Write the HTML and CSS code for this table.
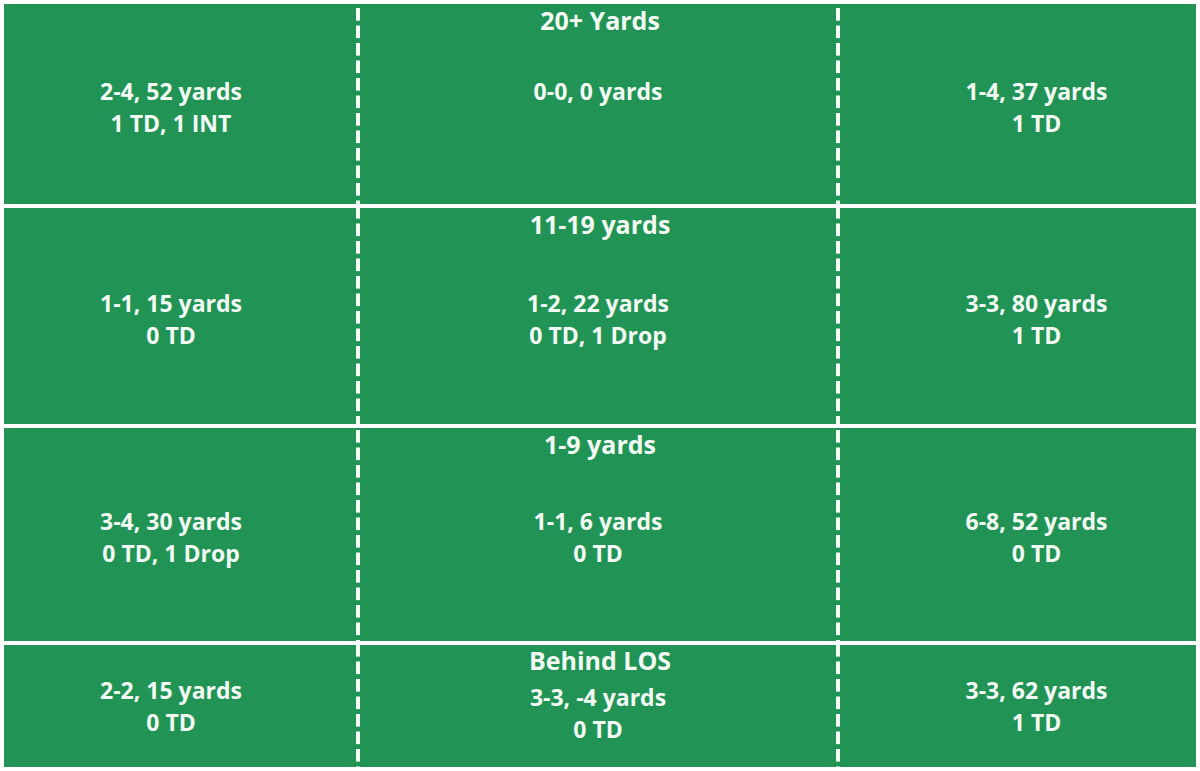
FILE: index.html
```html
<!DOCTYPE html>
<html>
<head>
<meta charset="utf-8">
<link rel="stylesheet" href="styles.css">
</head>
<body>
<div class="field">
  <div class="row row-deep">
    <div class="cell side-left"><div class="body">2-4, 52 yards<br>1 TD, 1 INT</div></div>
    <div class="cell mid">
      <div class="zone">20+ Yards</div>
      <div class="body">0-0, 0 yards<br>&nbsp;</div>
    </div>
    <div class="cell side-right"><div class="body">1-4, 37 yards<br>1 TD</div></div>
  </div>
  <div class="row row-inter">
    <div class="cell side-left"><div class="body">1-1, 15 yards<br>0 TD</div></div>
    <div class="cell mid">
      <div class="zone">11-19 yards</div>
      <div class="body">1-2, 22 yards<br>0 TD, 1 Drop</div>
    </div>
    <div class="cell side-right"><div class="body">3-3, 80 yards<br>1 TD</div></div>
  </div>
  <div class="row row-short">
    <div class="cell side-left"><div class="body">3-4, 30 yards<br>0 TD, 1 Drop</div></div>
    <div class="cell mid">
      <div class="zone">1-9 yards</div>
      <div class="body">1-1, 6 yards<br>0 TD</div>
    </div>
    <div class="cell side-right"><div class="body">6-8, 52 yards<br>0 TD</div></div>
  </div>
  <div class="row row-behind">
    <div class="cell side-left"><div class="body">2-2, 15 yards<br>0 TD</div></div>
    <div class="cell mid mid-stack">
      <div class="zone">Behind LOS</div>
      <div class="body">3-3, -4 yards<br>0 TD</div>
    </div>
    <div class="cell side-right"><div class="body">3-3, 62 yards<br>1 TD</div></div>
  </div>
</div>
</body>
</html>
```

FILE: styles.css
```css
html, body {
  margin: 0;
  padding: 0;
  background: #ffffff;
}

body {
  width: 1200px;
  height: 771px;
  overflow: hidden;
  font-family: "Open Sans", "Liberation Sans", sans-serif;
  font-weight: 700;
  color: #f3faf4;
}

.field {
  margin: 4px 4px 0 4px;
  width: 1192px;
  height: 763px;
  display: grid;
  grid-template-rows: 200px 216px 213px 122px;
  row-gap: 4px;
  background: #ffffff;
}

.row {
  display: grid;
  grid-template-columns: 352px 476px 356px;
  column-gap: 4px;
  background: repeating-linear-gradient(to bottom, #f6fbf7 0 12.5px, #219455 12.5px 17.5px);
  background-size: 100% 17.5px;
}

.row-deep { background-position: 0 4px; }
.row-inter { background-position: 0 -2px; }
.row-short { background-position: 0 2px; }
.row-behind { background-position: 0 -1px; }

.cell {
  background: #219455;
  display: grid;
  text-align: center;
  font-size: 23px;
  line-height: 32px;
}

.cell > * {
  grid-area: 1 / 1;
}

.body {
  align-self: center;
  margin-top: 5px;
}

.side-left {
  padding-right: 18px;
}

.side-right {
  padding-left: 37px;
}

.row-behind .side-left .body,
.row-behind .side-right .body {
  margin-top: 0;
}

.zone {
  align-self: start;
  font-size: 25px;
  line-height: 32px;
  padding-left: 4px;
}

.mid-stack {
  display: flex;
  flex-direction: column;
}

.mid-stack .zone {
  align-self: stretch;
  margin-top: -1px;
}
```
